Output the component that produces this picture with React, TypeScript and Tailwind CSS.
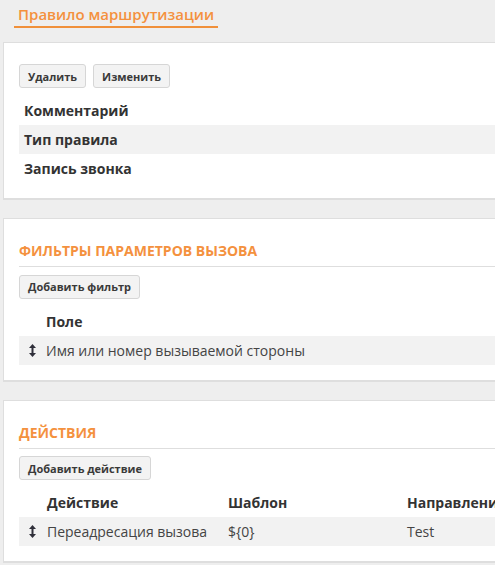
import React from "react";

const ORANGE = "text-[#f4913e]";

function SortIcon() {
  return (
    <svg width="7" height="13" viewBox="0 0 7 13" className="block">
      <path d="M3.5 0 L7 4 L4.5 4 L4.5 9 L7 9 L3.5 13 L0 9 L2.5 9 L2.5 4 L0 4 Z" fill="#2f2f3a" />
    </svg>
  );
}

function Btn({ children }: { children: React.ReactNode }) {
  return (
    <button className="h-[24px] px-[8px] rounded-[3px] border border-[#d6d6d6] bg-[#f3f3f3] text-[11px] font-bold text-[#3a3a3a] leading-none">
      {children}
    </button>
  );
}

function Card({ children, className = "" }: { children: React.ReactNode; className?: string }) {
  return (
    <div className={`ml-[3px] w-[600px] bg-white border border-[#dedede] border-b-2 px-[15px] ${className}`}>
      {children}
    </div>
  );
}

function SectionHeader({ title }: { title: string }) {
  return (
    <>
      <div className={`pt-[22px] pb-[5px] leading-[20px] text-[14px] font-bold ${ORANGE}`}>{title}</div>
      <div className="h-px bg-[#dedede]" />
    </>
  );
}

export default function App() {
  return (
    <div
      className="w-[495px] h-[565px] overflow-hidden bg-[#eeeeee] text-[#333]"
      style={{ fontFamily: '"Open Sans", "Noto Sans", sans-serif' }}
    >
      <div className="pl-[14px] pt-[2px]">
        <div className={`inline-block px-[4px] leading-[20px] pb-[2px] border-b-2 border-[#f0903a] text-[15px] font-semibold ${ORANGE}`}>
          Правило маршрутизации
        </div>
      </div>

      <Card className="mt-[14px] pt-[21px] pb-[15px]">
        <div className="flex gap-[7px]">
          <Btn>Удалить</Btn>
          <Btn>Изменить</Btn>
        </div>
        <div className="mt-[8px] text-[14px] font-bold">
          <div className="h-[29px] flex items-center px-[5px]">Комментарий</div>
          <div className="h-[29px] flex items-center px-[5px] bg-[#f2f2f2]">Тип правила</div>
          <div className="h-[29px] flex items-center px-[5px]">Запись звонка</div>
        </div>
      </Card>

      <Card className="mt-[18px] pb-[15px]">
        <SectionHeader title="ФИЛЬТРЫ ПАРАМЕТРОВ ВЫЗОВА" />
        <div className="mt-[6px]">
          <Btn>Добавить фильтр</Btn>
        </div>
        <div className="mt-[8px] text-[14px]">
          <div className="h-[29px] flex items-center">
            <div className="w-[22px]" />
            <div className="px-[5px] font-bold">Поле</div>
          </div>
          <div className="h-[29px] flex items-center bg-[#f2f2f2]">
            <div className="w-[22px] flex justify-center pl-[4px]">
              <SortIcon />
            </div>
            <div className="px-[5px] text-[#444]">Имя или номер вызываемой стороны</div>
          </div>
        </div>
      </Card>

      <Card className="mt-[18px] pb-[15px]">
        <SectionHeader title="ДЕЙСТВИЯ" />
        <div className="mt-[6px]">
          <Btn>Добавить действие</Btn>
        </div>
        <div className="mt-[8px] text-[14px]">
          <div className="h-[29px] flex items-center font-bold">
            <div className="w-[23px]" />
            <div className="w-[181px] px-[5px]">Действие</div>
            <div className="w-[179px] px-[5px]">Шаблон</div>
            <div className="px-[5px] whitespace-nowrap">Направление</div>
          </div>
          <div className="h-[29px] flex items-center bg-[#f2f2f2] text-[#444]">
            <div className="w-[23px] flex justify-center pl-[4px]">
              <SortIcon />
            </div>
            <div className="w-[181px] px-[5px]">Переадресация вызова</div>
            <div className="w-[179px] px-[5px]">{"${0}"}</div>
            <div className="px-[5px]">Test</div>
          </div>
        </div>
      </Card>
    </div>
  );
}
